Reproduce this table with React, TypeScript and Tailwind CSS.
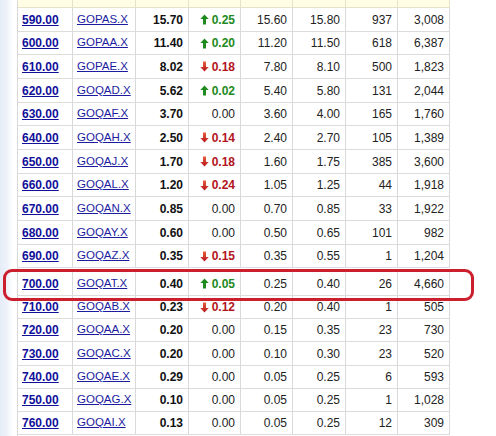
import type { ReactNode } from 'react'

type Row = {
  strike: string
  symbol: string
  last: string
  dir: 'up' | 'down' | null
  change: string
  bid: string
  ask: string
  vol: string
  oi: string
  h: string
}

const rows: Row[] = [
  { strike: '590.00', symbol: 'GOPAS.X', last: '15.70', dir: 'up', change: '0.25', bid: '15.60', ask: '15.80', vol: '937', oi: '3,008', h: 'h-[24px]' },
  { strike: '600.00', symbol: 'GOPAA.X', last: '11.40', dir: 'up', change: '0.20', bid: '11.20', ask: '11.50', vol: '618', oi: '6,387', h: 'h-[23px]' },
  { strike: '610.00', symbol: 'GOPAE.X', last: '8.02', dir: 'down', change: '0.18', bid: '7.80', ask: '8.10', vol: '500', oi: '1,823', h: 'h-[24px]' },
  { strike: '620.00', symbol: 'GOQAD.X', last: '5.62', dir: 'up', change: '0.02', bid: '5.40', ask: '5.80', vol: '131', oi: '2,044', h: 'h-[24px]' },
  { strike: '630.00', symbol: 'GOQAF.X', last: '3.70', dir: null, change: '0.00', bid: '3.60', ask: '4.00', vol: '165', oi: '1,760', h: 'h-[23px]' },
  { strike: '640.00', symbol: 'GOQAH.X', last: '2.50', dir: 'down', change: '0.14', bid: '2.40', ask: '2.70', vol: '105', oi: '1,389', h: 'h-[24px]' },
  { strike: '650.00', symbol: 'GOQAJ.X', last: '1.70', dir: 'down', change: '0.18', bid: '1.60', ask: '1.75', vol: '385', oi: '3,600', h: 'h-[24px]' },
  { strike: '660.00', symbol: 'GOQAL.X', last: '1.20', dir: 'down', change: '0.24', bid: '1.05', ask: '1.25', vol: '44', oi: '1,918', h: 'h-[23px]' },
  { strike: '670.00', symbol: 'GOQAN.X', last: '0.85', dir: null, change: '0.00', bid: '0.70', ask: '0.85', vol: '33', oi: '1,922', h: 'h-[24px]' },
  { strike: '680.00', symbol: 'GOQAY.X', last: '0.60', dir: null, change: '0.00', bid: '0.50', ask: '0.65', vol: '101', oi: '982', h: 'h-[24px]' },
  { strike: '690.00', symbol: 'GOQAZ.X', last: '0.35', dir: 'down', change: '0.15', bid: '0.35', ask: '0.55', vol: '1', oi: '1,204', h: 'h-[23px]' },
  { strike: '700.00', symbol: 'GOQAT.X', last: '0.40', dir: 'up', change: '0.05', bid: '0.25', ask: '0.40', vol: '26', oi: '4,660', h: 'h-[28px] pt-[4px]' },
  { strike: '710.00', symbol: 'GOQAB.X', last: '0.23', dir: 'down', change: '0.12', bid: '0.20', ask: '0.40', vol: '1', oi: '505', h: 'h-[23px]' },
  { strike: '720.00', symbol: 'GOQAA.X', last: '0.20', dir: null, change: '0.00', bid: '0.15', ask: '0.35', vol: '23', oi: '730', h: 'h-[23px]' },
  { strike: '730.00', symbol: 'GOQAC.X', last: '0.20', dir: null, change: '0.00', bid: '0.10', ask: '0.30', vol: '23', oi: '520', h: 'h-[24px]' },
  { strike: '740.00', symbol: 'GOQAE.X', last: '0.29', dir: null, change: '0.00', bid: '0.05', ask: '0.25', vol: '6', oi: '593', h: 'h-[23px]' },
  { strike: '750.00', symbol: 'GOQAG.X', last: '0.10', dir: null, change: '0.00', bid: '0.05', ask: '0.25', vol: '1', oi: '1,028', h: 'h-[23px]' },
  { strike: '760.00', symbol: 'GOQAI.X', last: '0.13', dir: null, change: '0.00', bid: '0.05', ask: '0.25', vol: '12', oi: '309', h: 'h-[23px]' },
]

const widths = ['w-[55px]', 'w-[63px]', 'w-[53px]', 'w-[52px]', 'w-[52px]', 'w-[53px]', 'w-[52px]', 'w-[52px]']

function UpArrow() {
  return (
    <svg width="9" height="11" viewBox="0 0 9 11" className="shrink-0">
      <path d="M4.5 0.5 L8.7 5 H6 V10.5 H3 V5 H0.3 Z" fill="#1e8a1e" />
    </svg>
  )
}

function DownArrow() {
  return (
    <svg width="9" height="11" viewBox="0 0 9 11" className="shrink-0">
      <defs>
        <linearGradient id="dn" x1="0" y1="0" x2="0" y2="1">
          <stop offset="0" stopColor="#e8603a" />
          <stop offset="1" stopColor="#b8141c" />
        </linearGradient>
      </defs>
      <path d="M3 0.5 H6 V6 H8.7 L4.5 10.5 L0.3 6 H3 Z" fill="url(#dn)" />
    </svg>
  )
}

function Cell({ i, className = '', children }: { i: number; className?: string; children?: ReactNode }) {
  return (
    <div className={`${widths[i]} shrink-0 border-r border-[#d9d9d9] flex items-center px-[4px] ${className}`}>
      {children}
    </div>
  )
}

export default function App() {
  return (
    <div className="relative flex h-[436px] w-[496px] overflow-hidden bg-white font-['Liberation_Sans',Arial,sans-serif] text-[12px] text-[#111]">
      <div className="w-[13px] shrink-0 bg-gradient-to-r from-[#e6edf7] via-[#edf2f9] to-white" />
      <div className="ml-[4px] flex flex-col border-l border-[#d9d9d9]">
        <div className="flex h-[8px] border-b border-[#e4e2c8] bg-[#fffde4]">
          {widths.map((w, i) => (
            <div key={i} className={`${w} shrink-0 border-r border-[#e4e2c8]`} />
          ))}
        </div>
        {rows.map((r) => (
          <div key={r.strike} className={`flex box-border border-b border-[#dcdcdc] ${r.h}`}>
            <Cell i={0}>
              <span className="font-bold text-[#10109a] underline">{r.strike}</span>
            </Cell>
            <Cell i={1}>
              <span className="text-[11.5px] text-[#1c1ca0] underline">{r.symbol}</span>
            </Cell>
            <Cell i={2} className="justify-end pr-[5px]">
              <span className="font-bold">{r.last}</span>
            </Cell>
            <Cell i={3} className="justify-end gap-[3px] pr-[5px]">
              {r.dir === 'up' && <UpArrow />}
              {r.dir === 'down' && <DownArrow />}
              <span
                className={
                  r.dir === 'up'
                    ? 'font-bold text-[#1e8a1e]'
                    : r.dir === 'down'
                      ? 'font-bold text-[#b3141c]'
                      : 'text-[#222]'
                }
              >
                {r.change}
              </span>
            </Cell>
            <Cell i={4} className="justify-end pr-[5px] text-[#222]">{r.bid}</Cell>
            <Cell i={5} className="justify-end pr-[5px] text-[#222]">{r.ask}</Cell>
            <Cell i={6} className="justify-end pr-[5px] text-[#222]">{r.vol}</Cell>
            <Cell i={7} className="justify-end pr-[5px] text-[#222]">{r.oi}</Cell>
          </div>
        ))}
      </div>
      {/* highlight box around the 700 strike */}
      <div className="pointer-events-none absolute left-[3px] top-[269px] h-[32px] w-[471px] rounded-[9px] border-[3px] border-[#cc1f2d]" />
    </div>
  )
}
